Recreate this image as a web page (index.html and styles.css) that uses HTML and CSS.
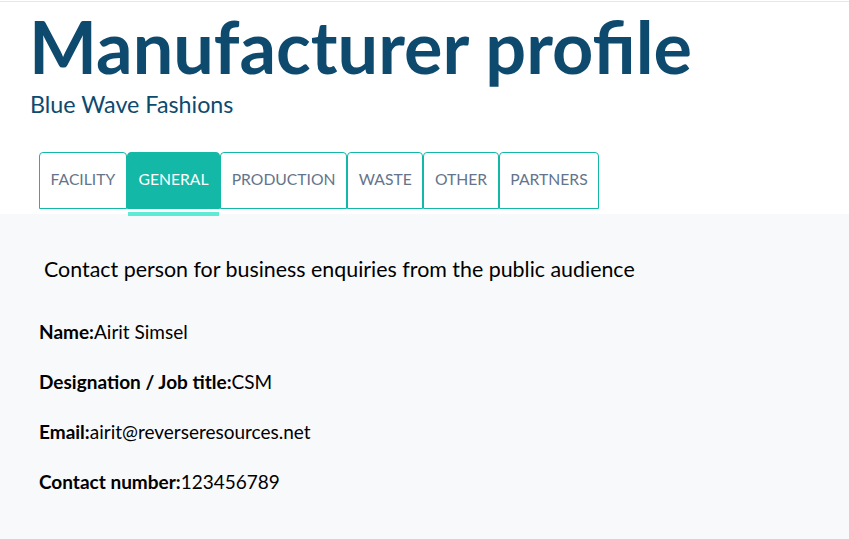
FILE: index.html
```html
<!DOCTYPE html>
<html lang="en">
<head>
<meta charset="utf-8">
<title>Manufacturer profile</title>
<link rel="stylesheet" href="styles.css">
</head>
<body>
<div class="topline"></div>
<header class="header">
  <h1 class="title">Manufacturer profile</h1>
  <p class="subtitle">Blue Wave Fashions</p>
</header>
<nav class="tabs">
  <div class="tab">FACILITY</div>
  <div class="tab tab-active">GENERAL</div>
  <div class="tab">PRODUCTION</div>
  <div class="tab">WASTE</div>
  <div class="tab">OTHER</div>
  <div class="tab">PARTNERS</div>
</nav>
<main class="panel">
  <h2 class="panel-title">Contact person for business enquiries from the public audience</h2>
  <p class="field"><b>Name:</b>Airit Simsel</p>
  <p class="field"><b>Designation / Job title:</b>CSM</p>
  <p class="field"><b>Email:</b>airit@reverseresources.net</p>
  <p class="field"><b>Contact number:</b>123456789</p>
</main>
</body>
</html>
```

FILE: styles.css
```css
html, body {
  margin: 0;
  padding: 0;
  height: 100%;
}
body {
  font-family: "Lato", "Liberation Sans", sans-serif;
  background: #ffffff;
  color: #000000;
  display: flex;
  flex-direction: column;
}
.topline {
  height: 1px;
  margin-top: 1px;
  background: #e5e7eb;
}
.header {
  padding: 0 0 0 29px;
}
.title {
  margin: 0;
  font-size: 72px;
  font-weight: 700;
  line-height: 88px;
  color: #0e4a6e;
}
.subtitle {
  margin: 0 0 0 1px;
  font-size: 23.3px;
  line-height: 28px;
  color: #0e4a6e;
}
.tabs {
  display: flex;
  padding: 34px 0 0 39px;
  position: relative;
  z-index: 1;
}
.tab {
  box-sizing: border-box;
  height: 57px;
  padding: 0 10.6px 3px;
  display: flex;
  align-items: center;
  border: 1px solid #14b8a6;
  border-radius: 4px 4px 0 0;
  font-size: 15.7px;
  color: #64748b;
  background: #ffffff;
}
.tab-active {
  background: #14b8a6;
  color: #ffffff;
  position: relative;
}
.tab-active::after {
  content: "";
  position: absolute;
  left: 0;
  right: 0;
  bottom: -8px;
  height: 4px;
  background: #5eead4;
}
.panel {
  flex: 1;
  margin-top: 5px;
  background: #f8f9fb;
  padding: 39px 0 0 39px;
}
.panel-title {
  margin: 0 0 22px 5px;
  font-size: 21.4px;
  font-weight: 400;
  line-height: 32px;
}
.field {
  margin: 0;
  font-size: 19px;
  line-height: 50px;
}
.field b {
  font-weight: 700;
}
```
